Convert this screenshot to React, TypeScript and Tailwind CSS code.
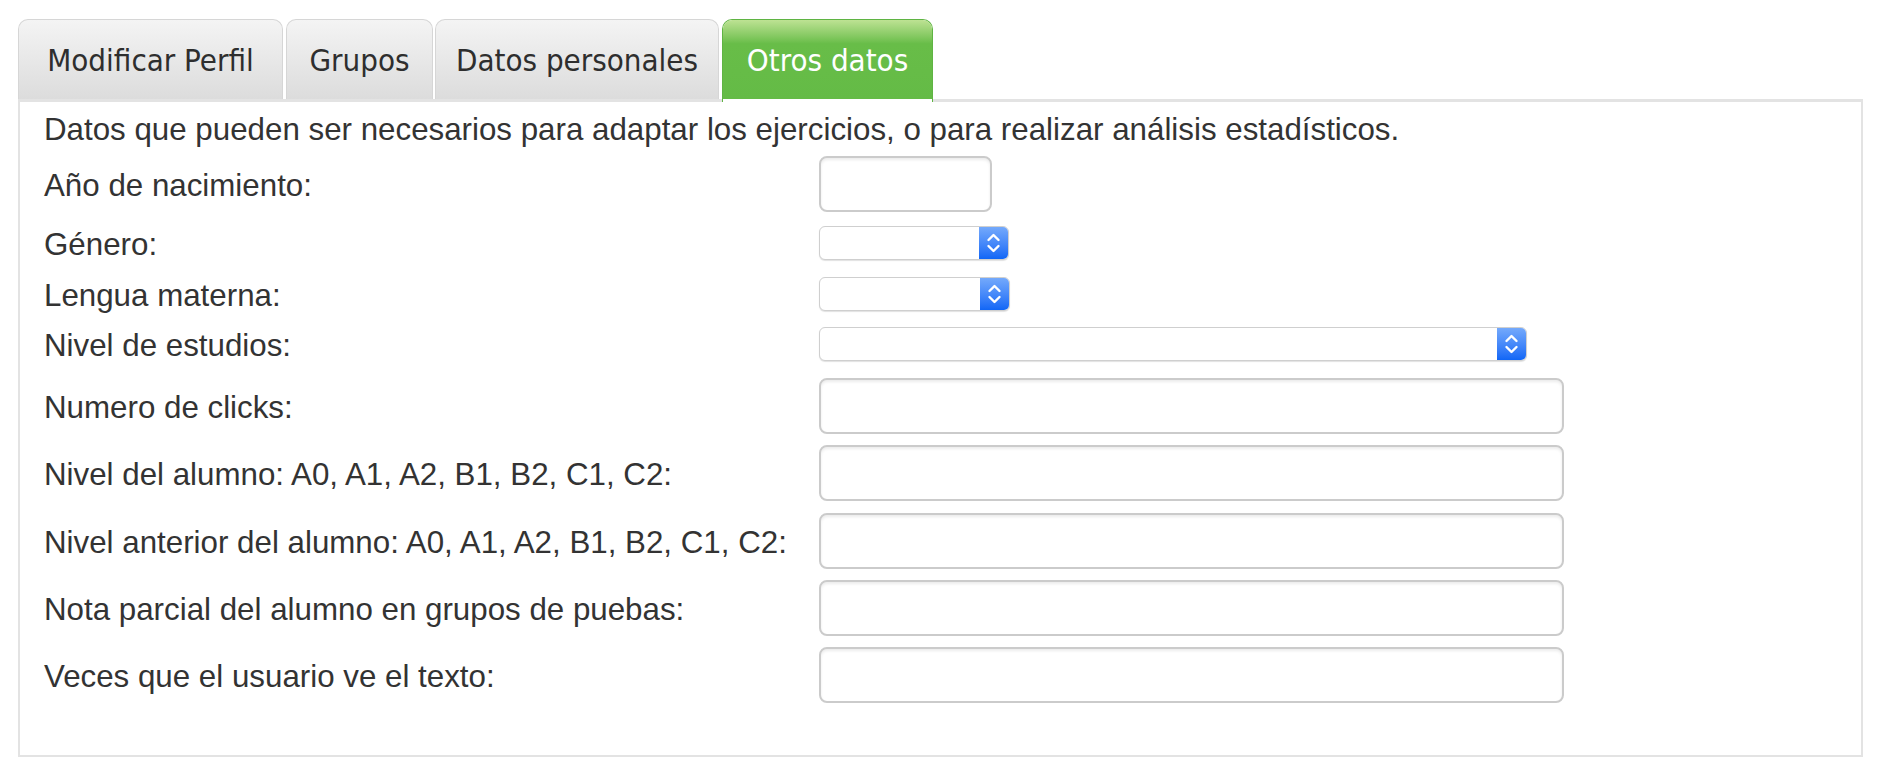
import React from 'react';

const tabFont = { fontFamily: '"DejaVu Sans Condensed", "DejaVu Sans", sans-serif', fontStretch: 'condensed' } as const;
const bodyFont = { fontFamily: '"Liberation Sans", Arial, sans-serif' } as const;

const tabs = [
  { label: 'Modificar Perfil', w: 'w-[265px]', ml: 'ml-0' },
  { label: 'Grupos', w: 'w-[147px]', ml: 'ml-[3px]' },
  { label: 'Datos personales', w: 'w-[284px]', ml: 'ml-[2px]' },
  { label: 'Otros datos', w: 'w-[211px]', ml: 'ml-[3px]', active: true },
];

function Chevrons() {
  return (
    <svg width="29" height="34" viewBox="0 0 29 34" fill="none">
      <path d="M9.5 14 L14.5 9 L19.5 14" stroke="white" strokeWidth="2.4" strokeLinecap="round" strokeLinejoin="round" />
      <path d="M9.5 20 L14.5 25 L19.5 20" stroke="white" strokeWidth="2.4" strokeLinecap="round" strokeLinejoin="round" />
    </svg>
  );
}

function FakeSelect({ width }: { width: string }) {
  return (
    <div className={`${width} h-[34px] flex rounded-[6px] border border-[#cfcfcf] bg-white shadow-[0_1px_1px_rgba(0,0,0,0.12)] overflow-hidden`}>
      <div className="flex-1" />
      <div className="w-[29px] h-full bg-gradient-to-b from-[#74a9fb] to-[#0f66f6] flex items-center justify-center">
        <Chevrons />
      </div>
    </div>
  );
}

function TextBox({ width }: { width: string }) {
  return (
    <input
      type="text"
      className={`${width} h-[56px] rounded-[8px] border-2 border-[#cbcbcb] bg-white shadow-[inset_0_2px_3px_rgba(0,0,0,0.08)] outline-none`}
    />
  );
}

type Row = { label: string; control: React.ReactNode; h: string; mt: string };

const rows: Row[] = [
  { label: 'Año de nacimiento:', control: <TextBox width="w-[173px]" />, h: 'h-[56px]', mt: 'mt-[9px]' },
  { label: 'Género:', control: <FakeSelect width="w-[190px]" />, h: 'h-[34px]', mt: 'mt-[14px]' },
  { label: 'Lengua materna:', control: <FakeSelect width="w-[191px]" />, h: 'h-[34px]', mt: 'mt-[17px]' },
  { label: 'Nivel de estudios:', control: <FakeSelect width="w-[708px]" />, h: 'h-[34px]', mt: 'mt-[16px]' },
  { label: 'Numero de clicks:', control: <TextBox width="w-[745px]" />, h: 'h-[56px]', mt: 'mt-[17px]' },
  { label: 'Nivel del alumno: A0, A1, A2, B1, B2, C1, C2:', control: <TextBox width="w-[745px]" />, h: 'h-[56px]', mt: 'mt-[11px]' },
  { label: 'Nivel anterior del alumno: A0, A1, A2, B1, B2, C1, C2:', control: <TextBox width="w-[745px]" />, h: 'h-[56px]', mt: 'mt-[12px]' },
  { label: 'Nota parcial del alumno en grupos de puebas:', control: <TextBox width="w-[745px]" />, h: 'h-[56px]', mt: 'mt-[11px]' },
  { label: 'Veces que el usuario ve el texto:', control: <TextBox width="w-[745px]" />, h: 'h-[56px]', mt: 'mt-[11px]' },
];

export default function App() {
  return (
    <div className="w-[1878px] h-[770px] bg-white pt-[19px] pl-[18px]">
      <div className="flex h-[80px] relative z-10" style={tabFont}>
        {tabs.map((t) =>
          t.active ? (
            <div
              key={t.label}
              className={`${t.w} ${t.ml} h-[83px] -mb-[3px] rounded-t-[10px] border border-b-0 border-[#5fb443] bg-white`}
            >
              <div className="h-[79px] pt-[2px] rounded-t-[9px] bg-gradient-to-b from-[#bde293] via-[#68bd48] via-30% to-[#64bb46] flex items-center justify-center text-white text-[31px]">
                {t.label}
              </div>
            </div>
          ) : (
            <div
              key={t.label}
              className={`${t.w} ${t.ml} h-[80px] pt-[2px] rounded-t-[10px] border border-b-0 border-[#d6d6d6] bg-gradient-to-b from-[#f4f4f4] to-[#dcdcdc] flex items-center justify-center text-[#2e2e2e] text-[31px]`}
            >
              {t.label}
            </div>
          )
        )}
      </div>
      <div
        className="w-[1845px] h-[658px] border-[#e3e3e3] border-t-[3px] border-x-2 border-b-2 pl-[24px] pt-[10px] text-[#333] text-[31.3px]"
        style={bodyFont}
      >
        <div className="leading-[36px]">
          Datos que pueden ser necesarios para adaptar los ejercicios, o para realizar análisis estadísticos.
        </div>
        <div className="-mt-px">
          {rows.map((r) => (
            <div key={r.label} className={`flex items-center ${r.h} ${r.mt}`}>
              <div className="w-[775px] pt-[4px] leading-[34px] whitespace-nowrap">{r.label}</div>
              {r.control}
            </div>
          ))}
        </div>
      </div>
    </div>
  );
}
